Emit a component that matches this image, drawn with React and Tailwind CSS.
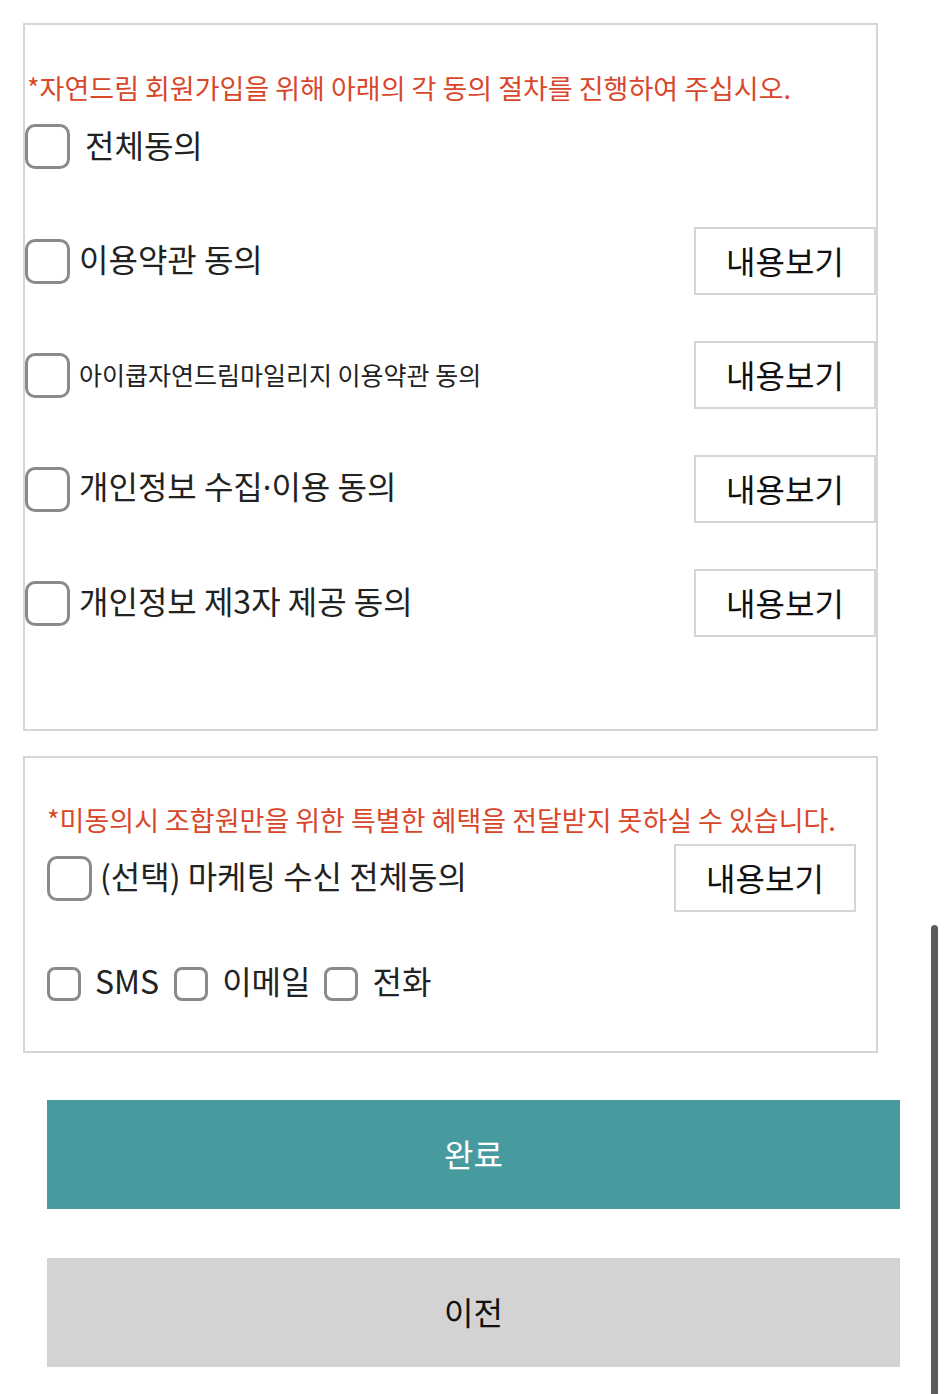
import React from "react";

const Box = ({ size = "lg" }) =>
  size === "lg" ? (
    <span className="block w-[45px] h-[45px] shrink-0 rounded-[10px] border-[3px] border-[#8a8a8a] bg-white" />
  ) : (
    <span className="block w-[34px] h-[34px] shrink-0 rounded-[8px] border-[3px] border-[#8a8a8a] bg-white" />
  );

const ViewButton = () => (
  <button className="w-[182px] h-[68px] shrink-0 border-2 border-[#d6d6d6] bg-white text-[32px] text-[#111] leading-none">
    <span className="block -mt-[3px]">내용보기</span>
  </button>
);

const TermRow = ({ label, small }) => (
  <div className="flex items-center justify-between h-[68px]">
    <div className="flex items-center gap-[9px]">
      <Box />
      <span className={small ? "text-[25px] leading-none -mt-[2px] text-[#222]" : "text-[32px] leading-none -mt-[7px] text-[#222]"}>{label}</span>
    </div>
    <ViewButton />
  </div>
);

export default function App() {
  return (
    <div className="relative w-[946px] h-[1394px] overflow-hidden bg-white font-['Noto_Sans_CJK_KR','Noto_Sans',sans-serif]">
      <div className="ml-[23px] mt-[23px] w-[855px] h-[708px] border-2 border-[#d6d6d6] pt-[45px]">
        <p className="pl-[2px] h-[36px] leading-[36px] text-[27px] text-[#d9472b] whitespace-nowrap">
          *자연드림 회원가입을 위해 아래의 각 동의 절차를 진행하여 주십시오.
        </p>
        <div className="mt-[18px] flex items-center gap-[15px] h-[45px]">
          <Box />
          <span className="text-[32px] leading-none -mt-[6px] text-[#222]">전체동의</span>
        </div>
        <div className="mt-[58px] flex flex-col gap-[46px]">
          <TermRow label="이용약관 동의" />
          <TermRow label="아이쿱자연드림마일리지 이용약관 동의" small />
          <TermRow
            label={
              <>
                개인정보 수집<span className="font-['Noto_Sans',sans-serif]">·</span>이용 동의
              </>
            }
          />
          <TermRow label="개인정보 제3자 제공 동의" />
        </div>
      </div>

      <div className="ml-[23px] mt-[25px] w-[855px] h-[297px] border-2 border-[#d6d6d6] pt-[44px] pl-[22px] pr-[20px]">
        <p className="h-[36px] leading-[36px] text-[27px] text-[#d9472b] whitespace-nowrap">
          *미동의시 조합원만을 위한 특별한 혜택을 전달받지 못하실 수 있습니다.
        </p>
        <div className="mt-[6px] flex items-center justify-between h-[68px]">
          <div className="flex items-center gap-[8px]">
            <Box />
            <span className="text-[32px] leading-none -mt-[6px] text-[#222]">(선택) 마케팅 수신 전체동의</span>
          </div>
          <ViewButton />
        </div>
        <div className="mt-[55px] flex items-center h-[34px] text-[32px] leading-none text-[#222]">
          <Box size="sm" />
          <span className="ml-[14px] -mt-[8px]">SMS</span>
          <span className="ml-[15px]"><Box size="sm" /></span>
          <span className="ml-[14px] -mt-[8px]">이메일</span>
          <span className="ml-[14px]"><Box size="sm" /></span>
          <span className="ml-[14px] -mt-[8px]">전화</span>
        </div>
      </div>

      <button className="block ml-[47px] mt-[47px] w-[853px] h-[109px] bg-[#479b9e] text-white text-[32px]">
        <span className="block -mt-[4px]">완료</span>
      </button>
      <button className="block ml-[47px] mt-[49px] w-[853px] h-[109px] bg-[#d3d3d3] text-[#111] text-[32px]">
        <span className="block -mt-[4px]">이전</span>
      </button>

      <div className="absolute left-[931px] top-[925px] w-[7px] h-[480px] rounded-full bg-[#5c5c5c]" />
    </div>
  );
}
